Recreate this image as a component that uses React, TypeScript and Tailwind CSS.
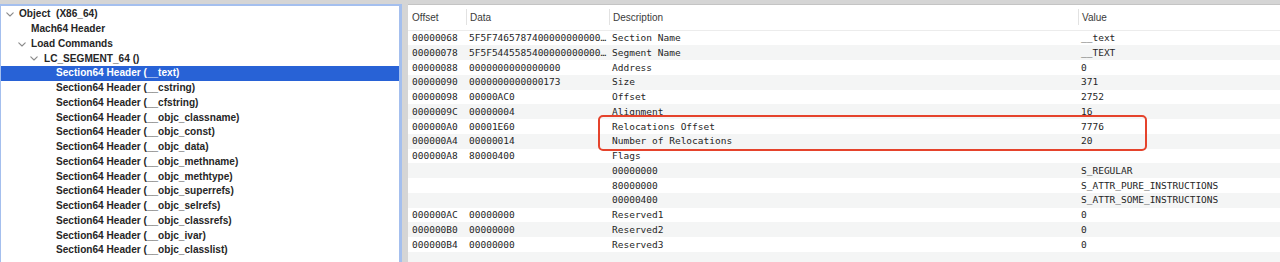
import React from "react";

const tree: { label: string; level: number; chevron?: boolean; selected?: boolean }[] = [
  { label: "Object  (X86_64)", level: 0, chevron: true },
  { label: "Mach64 Header", level: 1 },
  { label: "Load Commands", level: 1, chevron: true },
  { label: "LC_SEGMENT_64 ()", level: 2, chevron: true },
  { label: "Section64 Header (__text)", level: 3, selected: true },
  { label: "Section64 Header (__cstring)", level: 3 },
  { label: "Section64 Header (__cfstring)", level: 3 },
  { label: "Section64 Header (__objc_classname)", level: 3 },
  { label: "Section64 Header (__objc_const)", level: 3 },
  { label: "Section64 Header (__objc_data)", level: 3 },
  { label: "Section64 Header (__objc_methname)", level: 3 },
  { label: "Section64 Header (__objc_methtype)", level: 3 },
  { label: "Section64 Header (__objc_superrefs)", level: 3 },
  { label: "Section64 Header (__objc_selrefs)", level: 3 },
  { label: "Section64 Header (__objc_classrefs)", level: 3 },
  { label: "Section64 Header (__objc_ivar)", level: 3 },
  { label: "Section64 Header (__objc_classlist)", level: 3 },
];

const rows: [string, string, string, string][] = [
  ["00000068", "5F5F7465787400000000000…", "Section Name", "__text"],
  ["00000078", "5F5F5445585400000000000…", "Segment Name", "__TEXT"],
  ["00000088", "0000000000000000", "Address", "0"],
  ["00000090", "0000000000000173", "Size", "371"],
  ["00000098", "00000AC0", "Offset", "2752"],
  ["0000009C", "00000004", "Alignment", "16"],
  ["000000A0", "00001E60", "Relocations Offset", "7776"],
  ["000000A4", "00000014", "Number of Relocations", "20"],
  ["000000A8", "80000400", "Flags", ""],
  ["", "", "00000000", "S_REGULAR"],
  ["", "", "80000000", "S_ATTR_PURE_INSTRUCTIONS"],
  ["", "", "00000400", "S_ATTR_SOME_INSTRUCTIONS"],
  ["000000AC", "00000000", "Reserved1", "0"],
  ["000000B0", "00000000", "Reserved2", "0"],
  ["000000B4", "00000000", "Reserved3", "0"],
  ["", "", "", ""],
];

const indents = ["pl-[18px]", "pl-[30px]", "pl-[43px]", "pl-[55px]"];
const chevronPos = ["left-[5px]", "left-[17px]", "left-[29px]", "left-[41px]"];

function Chevron({ white }: { white?: boolean }) {
  return (
    <svg width="8" height="5" viewBox="0 0 8 5" fill="none">
      <path d="M0.8 0.8 L4 4 L7.2 0.8" stroke={white ? "#fff" : "#8a8a8a"} strokeWidth="1.1" strokeLinecap="round" strokeLinejoin="round" />
    </svg>
  );
}

export default function App() {
  return (
    <div className="relative w-[1280px] h-[262px] overflow-hidden bg-[#d5d5d5] flex pt-[4px]">
      {/* Left tree pane */}
      <div className="w-[402px] h-full bg-white border-t-2 border-r-[3px] border-l border-[#a4bfee] pt-[1px] overflow-hidden">
        {tree.map((t, i) => (
          <div
            key={i}
            className={`relative h-[14.75px] flex items-center ${indents[t.level]} ${t.selected ? "bg-[#2862d6] text-white" : "text-[#262626]"}`}
            style={{ fontFamily: '"Liberation Sans", Arial, sans-serif' }}
          >
            {t.chevron && (
              <span className={`absolute top-[5px] ${chevronPos[t.level]} flex`}>
                <Chevron white={t.selected} />
              </span>
            )}
            <span className="text-[10.1px] font-bold whitespace-pre leading-none">{t.label}</span>
          </div>
        ))}
      </div>

      {/* Divider */}
      <div className="w-[6px] h-full bg-[#d5d5d5]" />

      {/* Right table pane */}
      <div className="flex-1 h-full bg-white border-t border-[#c4c4c4] overflow-hidden">
        <div
          className="h-[25.5px] flex items-center text-[10px] text-[#3a3a3a] border-b border-[#ececec]"
          style={{ fontFamily: '"Liberation Sans", Arial, sans-serif' }}
        >
          <div className="w-[58px] pl-[4px]">Offset</div>
          <div className="w-[143px] pl-[3px] border-l border-[#e2e2e2] h-[16px] flex items-center">Data</div>
          <div className="w-[469px] pl-[3px] border-l border-[#e2e2e2] h-[16px] flex items-center">Description</div>
          <div className="flex-1 pl-[3px] border-l border-[#e2e2e2] h-[16px] flex items-center">Value</div>
        </div>
        {rows.map((r, i) => (
          <div
            key={i}
            className={`h-[14.75px] flex items-center text-[9.5px] text-[#262626] whitespace-pre ${i % 2 === 1 ? "bg-[#f4f5f5]" : "bg-white"}`}
            style={{ fontFamily: '"DejaVu Sans Mono", "Liberation Mono", monospace' }}
          >
            <div className="w-[58px] pl-[4px] leading-none">{r[0]}</div>
            <div className="w-[143px] pl-[3px] leading-none overflow-hidden">{r[1]}</div>
            <div className="w-[469px] pl-[3px] leading-none">{r[2]}</div>
            <div className="flex-1 pl-[3px] leading-none">{r[3]}</div>
          </div>
        ))}
      </div>

      {/* Red annotation box */}
      <div className="absolute left-[598px] top-[115px] w-[549px] h-[36px] border-2 border-[#e5432c] rounded-[5px] pointer-events-none" />
    </div>
  );
}
